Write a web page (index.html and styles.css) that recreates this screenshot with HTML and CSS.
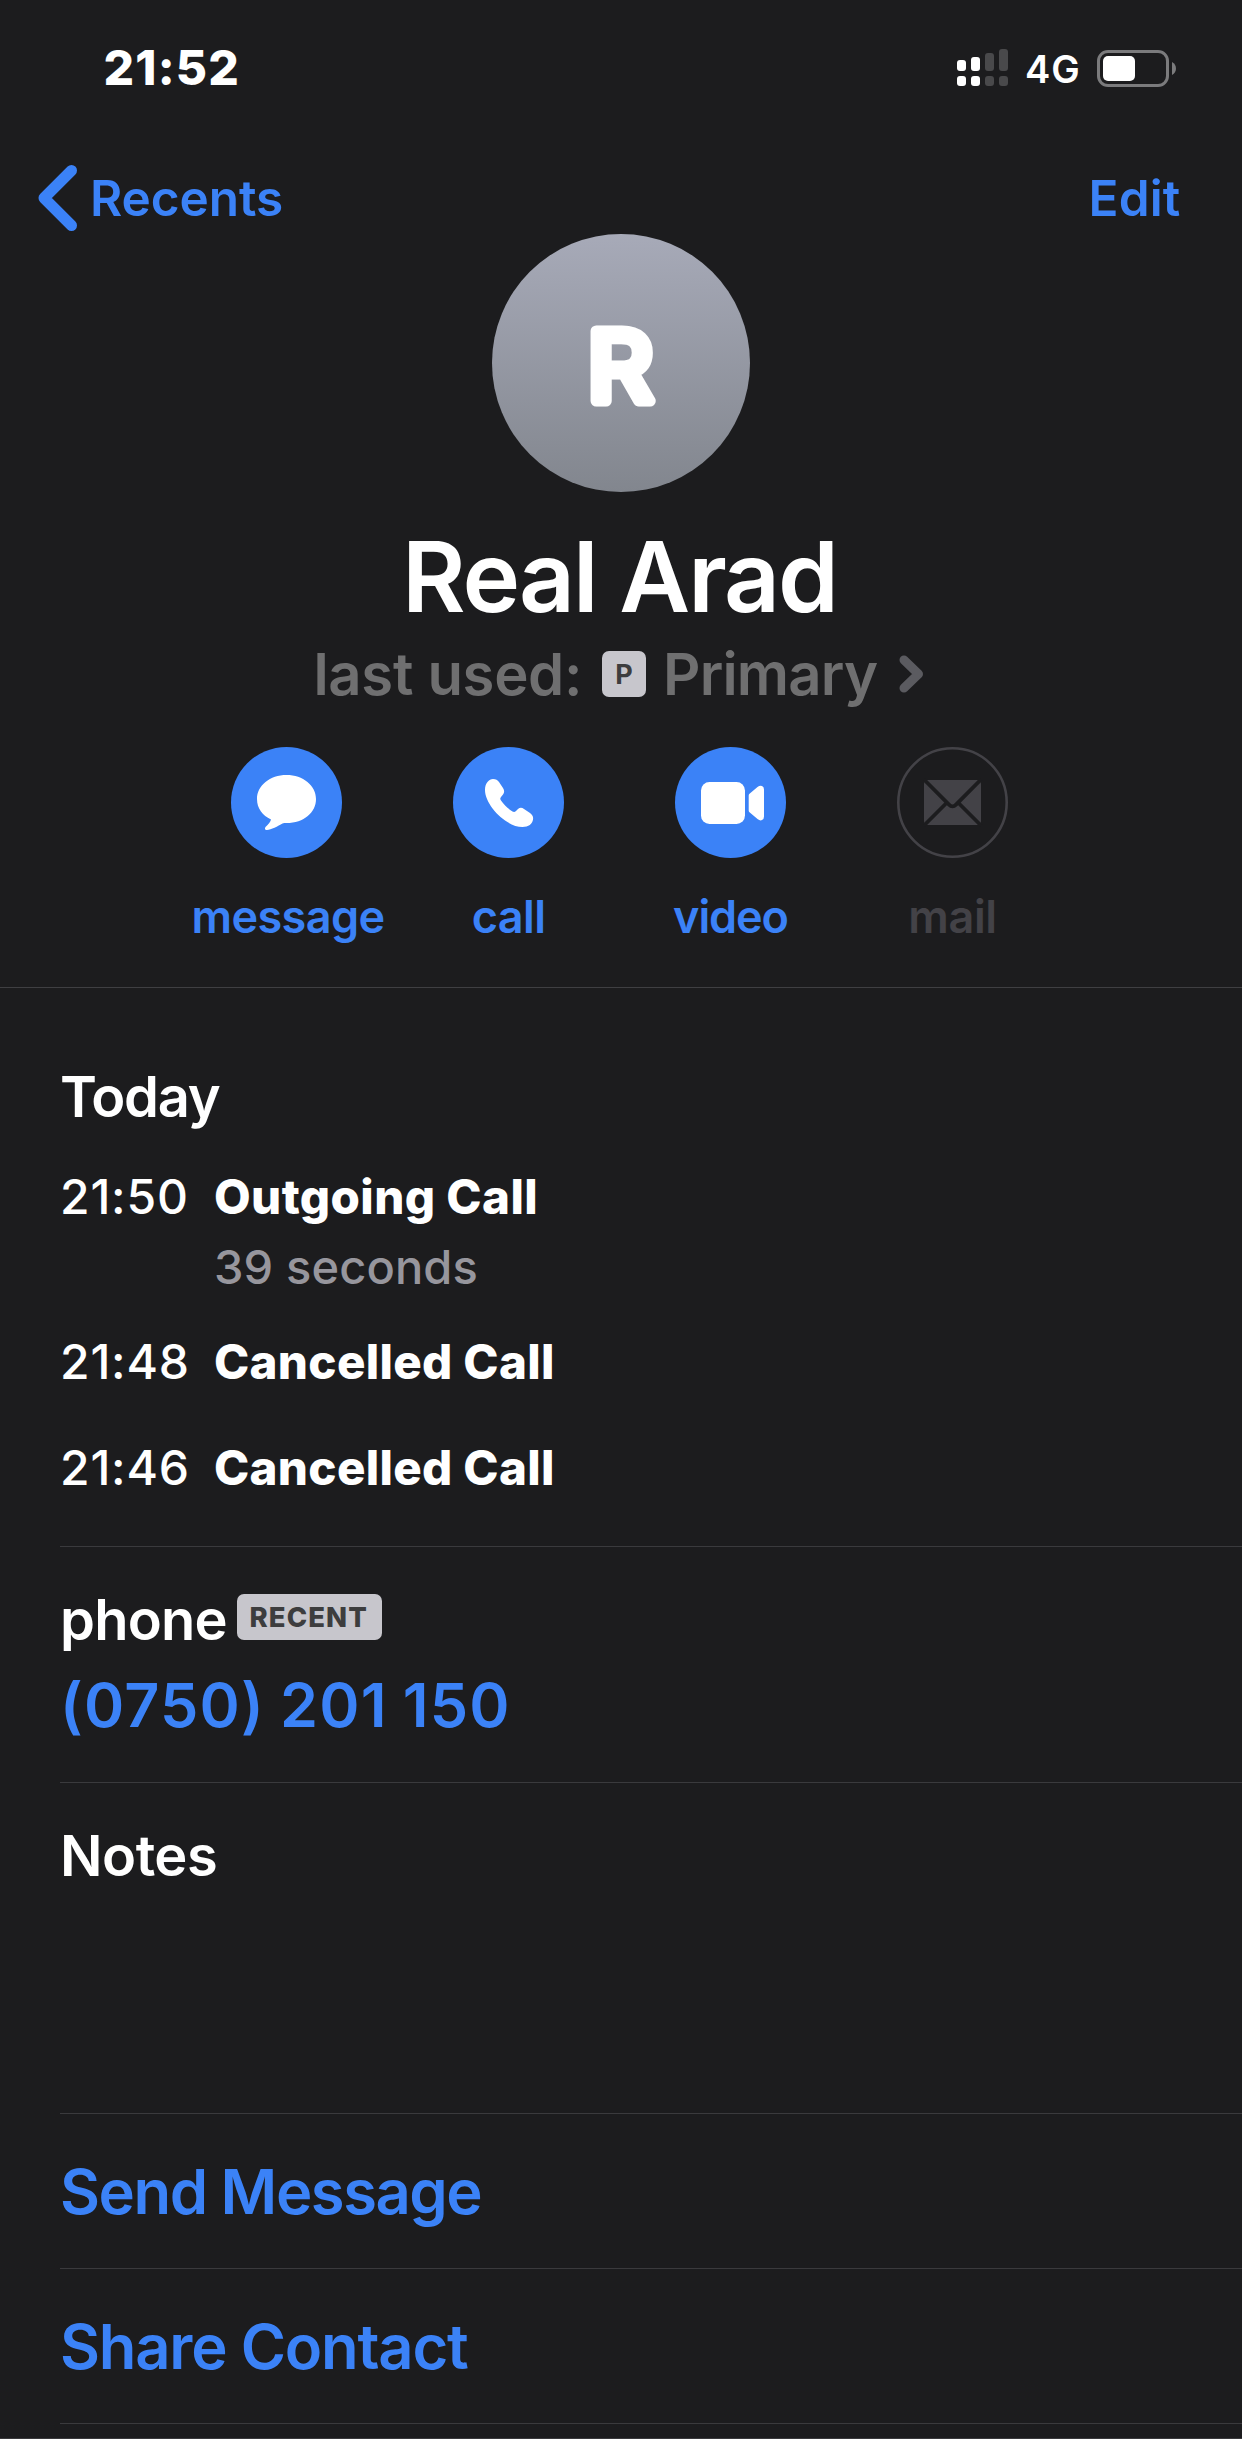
FILE: index.html
```html
<!DOCTYPE html>
<html lang="en">
<head>
<meta charset="utf-8">
<title>Real Arad</title>
<link rel="stylesheet" href="styles.css">
</head>
<body>
<div class="screen">
  <div class="status">
    <span class="clock">21:52</span>
    <div class="indicators">
      <svg class="signal" width="52" height="38" viewBox="0 0 52 38">
        <g fill="#fff">
          <rect x="0" y="11" width="9" height="11" rx="3"/>
          <rect x="14" y="8" width="9" height="14" rx="3"/>
          <rect x="0" y="27" width="9" height="10" rx="3"/>
          <rect x="14" y="27" width="9" height="10" rx="3"/>
        </g>
        <g fill="#49494b">
          <rect x="28" y="4" width="9" height="18" rx="3"/>
          <rect x="42" y="0" width="9" height="22" rx="3"/>
          <rect x="28" y="27" width="9" height="10" rx="3"/>
          <rect x="42" y="27" width="9" height="10" rx="3"/>
        </g>
      </svg>
      <span class="network">4G</span>
      <svg class="battery" width="80" height="37" viewBox="0 0 80 37">
        <rect x="1.5" y="1.5" width="69" height="34" rx="9.5" fill="none" stroke="#7b7b7d" stroke-width="3"/>
        <rect x="6" y="6" width="32" height="25" rx="5" fill="#fff"/>
        <path d="M75 12C80.300 14.500 80.300 22.500 75 25Z" fill="#7b7b7d"/>
      </svg>
    </div>
  </div>

  <nav class="nav">
    <a class="back">
      <svg width="40" height="66" viewBox="0 0 40 66"><path d="M33.500 5.500L6 33L33.500 60.500" fill="none" stroke="#3b82f7" stroke-width="11" stroke-linecap="round" stroke-linejoin="round"/></svg>
      <span>Recents</span>
    </a>
    <a class="edit">Edit</a>
  </nav>

  <header class="card">
    <svg class="avatar" width="258" height="258" viewBox="0 0 258 258">
      <defs><linearGradient id="shade" x1="0" y1="0" x2="0" y2="1"><stop offset="0" stop-color="#a7aab8"/><stop offset="1" stop-color="#82868e"/></linearGradient></defs>
      <circle cx="129" cy="129" r="129" fill="url(#shade)"/>
      <text class="initial" transform="translate(95.500 167) scale(1.060 1)">R</text>
    </svg>
    <h1 class="name">Real Arad</h1>
    <div class="line">
      <span class="used">last used:</span>
      <span class="sim">P</span>
      <span class="primary">Primary</span>
      <svg width="25" height="38" viewBox="0 0 25 38"><path d="M5 5L19.500 19L5 33" fill="none" stroke="#5b5b60" stroke-width="9" stroke-linecap="round" stroke-linejoin="round"/></svg>
    </div>
    <div class="actions">
      <a class="action message">
        <svg width="111" height="111" viewBox="0 0 111 111">
          <circle cx="55.500" cy="55.500" r="55.500" fill="#3b82f7"/>
          <path d="M55.500 28C72 28 85 38.500 85 52C85 65.500 73 76 55.500 76C54 76 52.500 76 51.500 76.500C47 79 40 83 36 83C33.500 83 33.500 81 35 79.500C37.500 77 39.500 75 40 72.500C31.500 68.500 26 61.500 26 52C26 38.500 39 28 55.500 28Z" fill="#fff"/>
        </svg>
        <span>message</span>
      </a>
      <a class="action call">
        <svg width="111" height="111" viewBox="0 0 111 111">
          <circle cx="55.500" cy="55.500" r="55.500" fill="#3b82f7"/>
          <path d="M32 43C32 36 36 32 40 32C43 32 44.500 33 46 35L50 41C51.500 43.500 51.500 45.500 50 47.500L48 50C47 51.500 47 52 48 53.500C51 58 55 61.500 59.500 64.500C61 65.300 61.800 65 63 64L65 62C67 60.400 69 60.600 71 62L77 66C79.500 68 80.500 69.500 80 72.500C79.500 77 75.500 80 69.500 80C53 80 32 58 32 43Z" fill="#fff"/>
        </svg>
        <span>call</span>
      </a>
      <a class="action video">
        <svg width="111" height="111" viewBox="0 0 111 111">
          <circle cx="55.500" cy="55.500" r="55.500" fill="#3b82f7"/>
          <rect x="26" y="35" width="44" height="42" rx="8.500" fill="#fff"/>
          <path d="M73.700 48.500Q73.700 47.500 74.500 46.800L82.500 40Q85 38 87 39Q89 39.800 89 42.500V69.500Q89 72.300 87 73.100Q85 74 82.500 72L74.500 65.200Q73.700 64.500 73.700 63.500Z" fill="#fff"/>
        </svg>
        <span>video</span>
      </a>
      <a class="action mail">
        <svg width="111" height="111" viewBox="0 0 111 111">
          <circle cx="55.500" cy="55.500" r="54.200" fill="none" stroke="#434247" stroke-width="2.600"/>
          <rect x="27" y="33" width="57" height="45" rx="4" fill="#434247"/>
          <path d="M27 32.500L52 57.600Q55.500 61.200 59 57.600L84 32.500M27 78.500L49 56.500M84 78.500L62 56.500" fill="none" stroke="#1c1c1e" stroke-width="3.800"/>
        </svg>
        <span>mail</span>
      </a>
    </div>
  </header>

  <main class="details">
    <section class="history">
      <h2 class="label today">Today</h2>
      <div class="entry">
        <span class="time">21:50</span><b class="kind outgoing">Outgoing Call</b>
        <span class="duration">39 seconds</span>
      </div>
      <div class="entry"><span class="time">21:48</span><b class="kind">Cancelled Call</b></div>
      <div class="entry last"><span class="time">21:46</span><b class="kind">Cancelled Call</b></div>
    </section>
    <section class="phone">
      <div class="phone-head"><span class="label">phone</span><span class="recent">RECENT</span></div>
      <a class="number">(0750) 201 150</a>
    </section>
    <section class="notes"><h2 class="label">Notes</h2></section>
    <a class="option send">Send Message</a>
    <a class="option share">Share Contact</a>
  </main>
  <div class="end"></div>
</div>
</body>
</html>
```
FILE: styles.css
```css
* { box-sizing: border-box; margin: 0; }

body {
  background: #1c1c1e;
  color: #fff;
  font-family: Inter, "Liberation Sans", sans-serif;
  font-weight: 600;
  white-space: nowrap;
}

.screen { width: 1242px; height: 2439px; display: flex; flex-direction: column; overflow: hidden; }
svg { display: block; flex: none; }

.status { height: 136px; padding: 0 65px 0 103.5px; display: flex; align-items: center; justify-content: space-between; }
.clock { font-size: 48px; font-weight: 800; letter-spacing: 1.2px; line-height: 60px; }
.indicators { display: flex; align-items: center; }
.signal { margin-right: 16px; margin-top: -1px; }
.network { width: 54px; margin-right: 18px; font-size: 38px; font-weight: 600; letter-spacing: 1px; line-height: 50px; padding-top: 2px; }

.nav { height: 98px; padding: 28px 61.5px 2px 38px; display: flex; align-items: center; justify-content: space-between; color: #3b82f7; font-size: 49.5px; line-height: 60px; }
.back { display: flex; align-items: center; gap: 12px; letter-spacing: -.07px; }
.edit { letter-spacing: .16px; }

.card { height: 754px; border-bottom: 1px solid #3f3f42; display: flex; flex-direction: column; align-items: center; }
.initial { font-size: 96px; font-weight: 400; fill: #fff; stroke: #fff; stroke-width: 11px; stroke-linejoin: round; }
.name { margin-top: 34px; margin-left: -3px; font-size: 97.5px; font-weight: 600; letter-spacing: -1.97px; line-height: 102px; }
.line { align-self: stretch; height: 92px; padding-left: 313.5px; display: flex; align-items: center; font-size: 58px; line-height: 70px; color: #6f6f70; }
.used { width: 288.5px; letter-spacing: -.31px; }
.sim { width: 44px; height: 46px; margin-right: 17px; border-radius: 7px; background: #c7c6cc; color: #3d3d3e; font-size: 27px; font-weight: 700; line-height: 47px; text-align: center; }
.primary { width: 235.500px; letter-spacing: -.77px; }

.actions { align-self: stretch; margin: 27px 0 0 175.5px; display: grid; grid-template-columns: repeat(4, 222px); }
.action { display: flex; flex-direction: column; align-items: center; gap: 29px; color: #3b82f7; font-size: 45px; line-height: 60px; }
.message span { padding-left: 3px; letter-spacing: -.6px; }
.call span { letter-spacing: -.6px; }
.video span { letter-spacing: -1.1px; }
.mail span { letter-spacing: -.38px; }
.mail { color: #434247; }

.details { margin-left: 60px; }
.label { font-size: 56px; font-weight: 600; letter-spacing: -.49px; line-height: 61px; }
.today { margin-bottom: 39px; letter-spacing: -1.3px; }
.history { padding: 79px 0 48px; border-bottom: 1px solid #3a3a3d; }
.entry { display: grid; grid-template-columns: 154px auto; row-gap: 10px; margin-bottom: 35px; font-size: 47px; line-height: 60px; }
.entry + .entry { margin-bottom: 46px; }
.entry.last { margin-bottom: 0; }
.time { font-size: 48px; font-weight: 500; letter-spacing: .8px; }
.kind { font-size: 47.5px; font-weight: 800; letter-spacing: .3px; }
.outgoing { letter-spacing: .4px; }
.duration { grid-column: 2; color: #97969d; font-weight: 500; letter-spacing: .13px; }

.phone { height: 236px; padding-top: 43px; border-bottom: 1px solid #3a3a3d; }
.phone-head { height: 60px; display: flex; align-items: flex-start; }
.phone .label { width: 177px; line-height: 60px; letter-spacing: -.8px; }
.recent { width: 145px; height: 46px; margin-top: 4px; padding-left: 12.5px; border-radius: 7px; background: #c7c6cc; color: #3d3d3e; font-size: 27.5px; font-weight: 800; letter-spacing: 1.1px; line-height: 47px; }
.number { display: block; margin-top: 23px; color: #3b82f7; font-size: 61px; line-height: 64px; letter-spacing: 1.2px; word-spacing: -1.5px; }
.notes { height: 331px; padding-top: 43px; border-bottom: 1px solid #3a3a3d; }
.option { display: block; height: 155px; padding-top: 1px; border-bottom: 1px solid #3a3a3d; color: #3b82f7; font-size: 61.5px; line-height: 153px; }
.send { letter-spacing: -1.45px; }
.share { letter-spacing: -1.2px; }
.end { margin-top: auto; height: 1px; background: #3a3a3d; }
```
